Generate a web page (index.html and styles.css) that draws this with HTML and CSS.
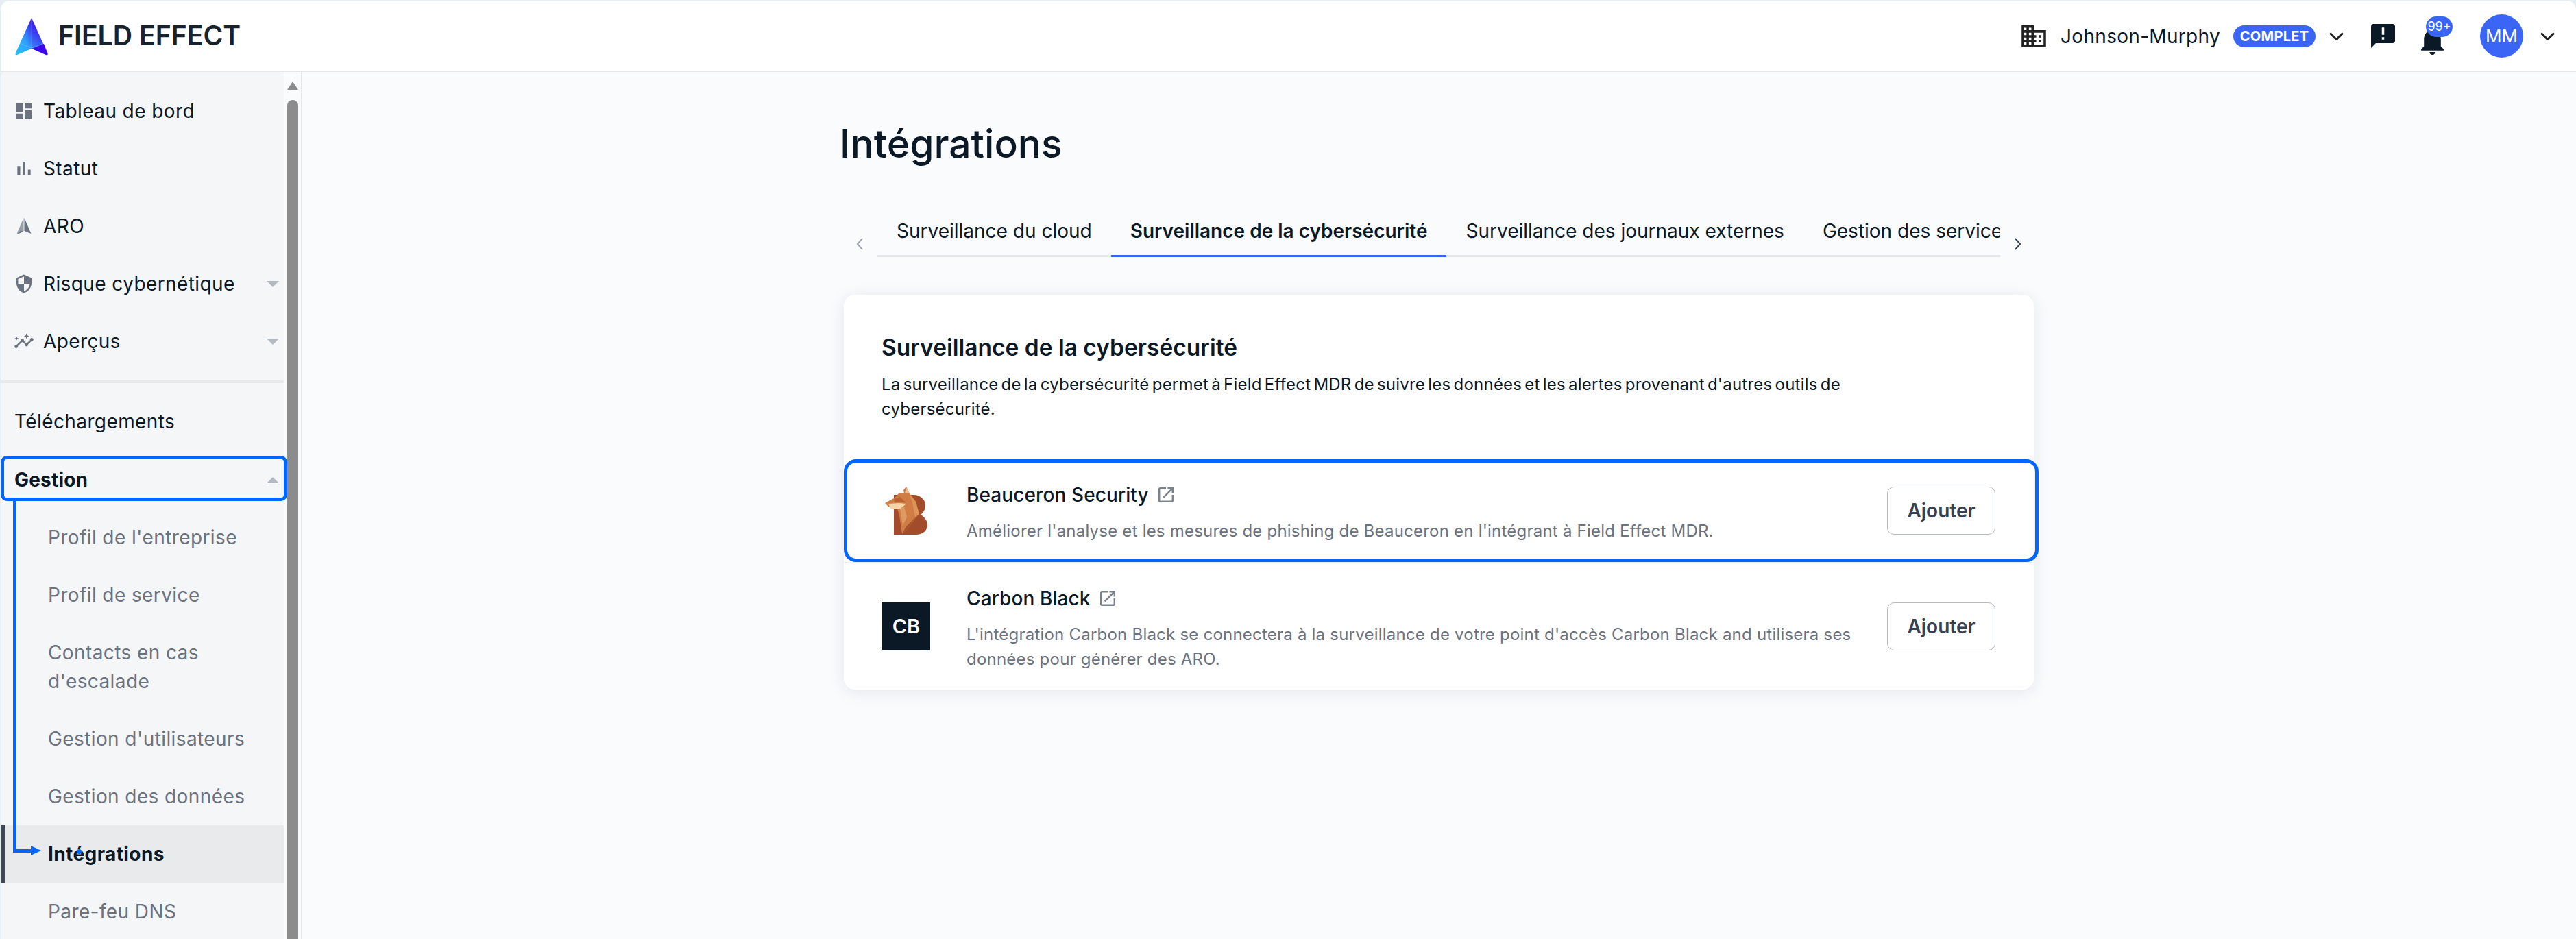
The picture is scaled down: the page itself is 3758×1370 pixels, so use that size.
FILE: index.html
```html
<!DOCTYPE html>
<html lang="fr">
<head>
<meta charset="utf-8">
<title>Intégrations</title>
<link rel="stylesheet" href="styles.css">
</head>
<body>
<div class="app">
  <header class="topbar">
    <div class="brand">
      <svg class="brand-mark" viewBox="0 0 50 56">
        <defs>
          <linearGradient id="fl" x1="0" y1="1" x2="0.7" y2="0"><stop offset="0" stop-color="#22c4f8"/><stop offset="0.55" stop-color="#2f9ffb"/><stop offset="1" stop-color="#3d2cf0"/></linearGradient>
          <linearGradient id="fr" x1="0" y1="1" x2="0.3" y2="0"><stop offset="0" stop-color="#3a9cf8"/><stop offset="1" stop-color="#3a00ee"/></linearGradient>
        </defs>
        <path d="M25 1 L1.5 53 Q1 56 4 55 L25 46 L25 1Z" fill="url(#fl)"/>
        <path d="M25 1 L48.5 53 Q49 56 46 55 L25 46Z" fill="url(#fr)"/>
        <path d="M26 46 L43 39 L48.5 53 Q49 56 46 55Z" fill="#3d06ee"/>
        <path d="M25 1 V45 M8 38 L25 45 L43 38" fill="none" stroke="#fff" stroke-opacity=".28" stroke-width=".7"/>
      </svg>
      <span class="brand-name">FIELD EFFECT</span>
    </div>
    <div class="account">
      <svg class="ic-domain" viewBox="2 3 20 18"><path d="M12 7V3H2v18h20V7H12zM6 19H4v-2h2v2zm0-4H4v-2h2v2zm0-4H4V9h2v2zm0-4H4V5h2v2zm4 12H8v-2h2v2zm0-4H8v-2h2v2zm0-4H8V9h2v2zm0-4H8V5h2v2zm10 12h-8v-2h2v-2h-2v-2h2v-2h-2V9h8v10zm-2-8h-2v2h2v-2zm0 4h-2v2h2v-2z"/></svg>
      <span class="company">Johnson-Murphy</span>
      <span class="plan">COMPLET</span>
      <svg class="chev" viewBox="1 1 18 10"><path d="M2 2l8 8 8-8"/></svg>
      <svg class="ic-alert" viewBox="2 2 20 20"><path d="M20 2H4c-1.1 0-1.99.9-1.99 2L2 22l4-4h14c1.1 0 2-.9 2-2V4c0-1.1-.9-2-2-2zm-7 9h-2V5h2v6zm0 4h-2v-2h2v2z"/></svg>
      <div class="bell">
        <svg class="ic-bell" viewBox="4 2.5 16 19.5"><path d="M12 22c1.1 0 2-.9 2-2h-4c0 1.1.89 2 2 2zm6-6v-5c0-3.07-1.64-5.64-4.5-6.32V4c0-.83-.67-1.5-1.5-1.5s-1.5.67-1.5 1.5v.68C7.63 5.36 6 7.92 6 11v5l-2 2v1h16v-1l-2-2z"/></svg>
        <span class="count">99+</span>
      </div>
      <span class="avatar">MM</span>
      <svg class="chev chev-last" viewBox="1 1 18 10"><path d="M2 2l8 8 8-8"/></svg>
    </div>
  </header>

  <div class="workspace">
    <aside class="sidebar">
      <nav class="nav">
        <a class="nav-item"><span class="nav-ic"><svg viewBox="-1.1 -1.1 26.2 26.2"><path d="M3 13h8V3H3v10zm0 8h8v-6H3v6zm10 0h8V11h-8v10zm0-18v6h8V3h-8z"/></svg></span>Tableau de bord</a>
        <a class="nav-item"><span class="nav-ic"><svg viewBox="0.4 0.4 23.2 23.2"><path d="M5 9.2h3V19H5zM10.6 5h2.8v14h-2.8zm5.6 8H19v6h-2.8z"/></svg></span>Statut</a>
        <a class="nav-item"><span class="nav-ic"><svg viewBox="0 0 32 32"><path d="M15.5 4 L5.5 27 L15.5 23Z" fill="#9aa0a8"/><path d="M16.5 4 L26.5 27 L16.5 23Z"/><path d="M5.5 28 L15.5 24 L11 22.5Z"/></svg></span>ARO</a>
        <a class="nav-item"><span class="nav-ic"><svg viewBox="-1.1 -1.1 26.2 26.2"><path d="M12 1L3 5v6c0 5.55 3.84 10.74 9 12 5.16-1.26 9-6.45 9-12V5l-9-4zm0 10.99h7c-.53 4.12-3.28 7.79-7 8.94V12H5V6.3l7-3.11v8.8z"/></svg></span>Risque cybernétique<span class="caret down"></span></a>
        <a class="nav-item"><span class="nav-ic"><svg class="ic-insights" viewBox="0 0 24 24"><path d="M21 8c-1.45 0-2.26 1.44-1.93 2.51l-3.55 3.56c-.3-.09-.74-.09-1.04 0l-2.55-2.55C12.27 10.45 11.46 9 10 9c-1.45 0-2.27 1.44-1.93 2.52l-4.56 4.55C2.44 15.74 1 16.55 1 18c0 1.1.9 2 2 2 1.45 0 2.26-1.44 1.93-2.51l4.55-4.56c.3.09.74.09 1.04 0l2.55 2.55C12.73 16.55 13.54 18 15 18c1.45 0 2.27-1.44 1.93-2.52l3.56-3.55c1.07.33 2.51-.48 2.51-1.93 0-1.1-.9-2-2-2z"/><path d="M15 9l.94-2.07L18 6l-2.06-.93L15 3l-.92 2.07L12 6l2.08.93zM3.5 11L4 9l2-.5L4 8l-.5-2L3 8l-2 .5L3 9z"/></svg></span>Aperçus<span class="caret down"></span></a>
        <div class="nav-rule"></div>
        <a class="nav-item plain">Téléchargements</a>
        <a class="nav-item plain strong">Gestion<span class="caret up"></span></a>
        <a class="nav-sub">Profil de l'entreprise</a>
        <a class="nav-sub">Profil de service</a>
        <a class="nav-sub">Contacts en cas d'escalade</a>
        <a class="nav-sub">Gestion d'utilisateurs</a>
        <a class="nav-sub">Gestion des données</a>
        <a class="nav-sub current">Intégrations</a>
        <a class="nav-sub">Pare-feu DNS</a>
      </nav>
      <div class="guide-box"></div>
      <div class="guide-line"></div>
      <div class="guide-turn"></div>
      <div class="guide-dot"></div>
    </aside>
    <div class="scrollbar">
      <span class="scroll-up"></span>
      <span class="scroll-thumb"></span>
    </div>

    <main class="main">
      <div class="page">
        <h1 class="page-title">Intégrations</h1>
        <div class="tabs">
          <svg class="tab-arrow muted" viewBox="0 0 12 20"><path d="M10 2L3 10l7 8"/></svg>
          <div class="tab-track">
            <a class="tab">Surveillance du cloud</a>
            <a class="tab active">Surveillance de la cybersécurité</a>
            <a class="tab">Surveillance des journaux externes</a>
            <a class="tab">Gestion des services</a>
          </div>
          <svg class="tab-arrow" viewBox="0 0 12 20"><path d="M2 2l7 8-7 8"/></svg>
        </div>

        <section class="card">
          <div class="card-head">
            <h2 class="card-title">Surveillance de la cybersécurité</h2>
            <p class="card-desc">La surveillance de la cybersécurité permet à Field Effect MDR de suivre les données et les alertes provenant d'autres outils de cybersécurité.</p>
          </div>

          <div class="row highlighted">
            <svg class="row-logo" viewBox="18 18 70 70">
              <path d="M35 30H63C75 30 81 38 81 45C81 52 77 57 74 59C80 62 84 68 84 74C84 82 77 88 67 88H35Z" fill="#a24c2b"/>
              <path d="M43 27L50 28L49 23L53 18L58 28L67 40L72 58L68 62L55 80L47 87L43 60L40 50L27 47L22 42L35 35Z" fill="#cf7d45"/>
              <path d="M51 28L53 19L58 28Z" fill="#f1b98a"/>
              <path d="M58 28L67 40L72 58L66 62L62 42Z" fill="#dd9555"/>
              <path d="M47 87L53 76L68 61L55 80Z" fill="#a9552c"/>
              <path d="M35 36L44 33L52 41L36 41Z" fill="#b9642f"/>
              <path d="M27 43L42 42L53 43L45 50L39 50L30 50Z" fill="#f8d5a8"/>
              <path d="M44 50L50 47L54 62L48 75Z" fill="#de9a60"/>
            </svg>
            <div class="row-body">
              <h3 class="row-name">Beauceron Security<svg class="ext" viewBox="3 3 18 18"><path d="M19 19H5V5h7V3H5c-1.11 0-2 .9-2 2v14c0 1.1.89 2 2 2h14c1.1 0 2-.9 2-2v-7h-2v7zM14 3v2h3.59l-9.83 9.83 1.41 1.41L19 6.41V10h2V3h-7z"/></svg></h3>
              <p class="row-desc">Améliorer l'analyse et les mesures de phishing de Beauceron en l'intégrant à Field Effect MDR.</p>
            </div>
            <button class="add">Ajouter</button>
          </div>

          <div class="row tall">
            <span class="row-logo cb">CB</span>
            <div class="row-body">
              <h3 class="row-name">Carbon Black<svg class="ext" viewBox="3 3 18 18"><path d="M19 19H5V5h7V3H5c-1.11 0-2 .9-2 2v14c0 1.1.89 2 2 2h14c1.1 0 2-.9 2-2v-7h-2v7zM14 3v2h3.59l-9.83 9.83 1.41 1.41L19 6.41V10h2V3h-7z"/></svg></h3>
              <p class="row-desc">L'intégration Carbon Black se connectera à la surveillance de votre point d'accès Carbon Black and utilisera ses données pour générer des ARO.</p>
            </div>
            <button class="add">Ajouter</button>
          </div>
        </section>
      </div>
    </main>
  </div>
</div>
</body>
</html>
```
FILE: styles.css
```css
* { box-sizing: border-box; }
html, body { margin: 0; height: 100%; }
body {
  background: #e4eef3;
  font-family: Inter, "Noto Sans", sans-serif;
  color: #0b1826;
  overflow: hidden;
  padding-top: 1px;
}
.app { height: 1369px; display: flex; flex-direction: column; overflow: hidden; border-radius: 14px 14px 0 0; background: #fafbfd; margin-left: 1px; }

/* top bar */
.topbar {
  height: 104px;
  flex: none;
  background: #fff;
  border-bottom: 1px solid #e5e7eb;
  display: flex;
  align-items: center;
  justify-content: space-between;
  padding: 0 31px 0 20px;
}
.brand { display: flex; align-items: center; gap: 14px; margin-top: -1px; }
.brand-mark { width: 50px; height: 56px; display: block; margin-top: 2px; }
.brand-name { font-size: 39.2px; font-weight: 600; color: #18222c; line-height: 1; }
.account { display: flex; align-items: center; }
.ic-domain { width: 36px; height: 32px; fill: #222; }
.company { font-size: 28px; letter-spacing: .3px; margin-left: 21px; white-space: nowrap; }
.plan {
  margin-left: 19px;
  background: #3b66f5;
  color: #fff;
  height: 32px;
  width: 120px;
  border-radius: 16px;
  font-size: 20px;
  font-weight: 700;
  letter-spacing: .3px;
  display: flex;
  align-items: center;
  justify-content: center;
}
.chev { width: 21px; height: 12px; fill: none; stroke: #222; stroke-width: 2.6; margin-left: 20px; }
.ic-alert { width: 35px; height: 35px; fill: #0b1826; margin-left: 40px; }
.bell { position: relative; width: 33px; height: 40px; margin-left: 38px; margin-top: 14px; }
.ic-bell { width: 33px; height: 40px; fill: #0b1826; display: block; }
.count {
  position: absolute;
  left: 7px;
  top: -16px;
  width: 39px;
  height: 30px;
  border-radius: 15px;
  background: #3b66f5;
  color: #fff;
  font-size: 18px;
  display: flex;
  align-items: center;
  justify-content: center;
}
.avatar {
  width: 63px;
  height: 63px;
  border-radius: 50%;
  background: #3b66f5;
  color: #fff;
  font-size: 26px;
  margin-left: 53px;
  display: flex;
  align-items: center;
  justify-content: center;
}
.chev-last { margin-left: 25px; }

/* layout */
.workspace { flex: 1; min-height: 0; display: flex; }
.sidebar { width: 413px; flex: none; background: #f5f6f8; position: relative; z-index: 2; }
.scrollbar { width: 26px; flex: none; background: #fafbfc; border-right: 1px solid #e5e7eb; padding: 14px 5px 0 5px; display: flex; flex-direction: column; gap: 15px; }
.scroll-up { width: 0; height: 0; border-left: 8px solid transparent; border-right: 8px solid transparent; border-bottom: 12px solid #8c8c8c; }
.scroll-thumb { flex: 1; background: #8c8c8c; width: 16px; border-radius: 8px 8px 0 0; }

/* nav */
.nav { display: flex; flex-direction: column; padding-top: 15px; letter-spacing: .4px; }
.nav-item {
  height: 84px;
  flex: none;
  font-size: 28px;
  display: flex;
  align-items: center;
  padding: 0 7px 0 18px;
  gap: 12px;
  white-space: nowrap;
}
.nav-ic { width: 32px; height: 32px; display: flex; align-items: center; justify-content: center; flex: none; }
.nav-ic svg { width: 32px; height: 32px; fill: #6b7280; }
.nav-ic .ic-insights { width: 30px; height: 30px; }
.nav-item.plain { padding-left: 20px; }
.nav-item.strong { font-weight: 700; letter-spacing: .2px; margin-top: 1px; }
.caret { margin-left: auto; width: 0; height: 0; border-left: 9px solid transparent; border-right: 9px solid transparent; }
.caret.down { border-top: 9px solid #b4b9c0; }
.caret.up { border-bottom: 9px solid #b4b9c0; }
.nav-rule { height: 4px; background: #e9eaec; margin: 15px 0 14px; flex: none; }
.nav-sub {
  min-height: 84px;
  padding: 21px 20px 21px 69px;
  font-size: 28px;
  line-height: 42px;
  color: #6b7280;
}
.nav-sub.current {
  background: #e9eaec;
  color: #0b1826;
  font-weight: 700;
  box-shadow: inset 7px 0 0 #414b57;
}

/* overlay guide */
.guide-box { position: absolute; left: 0; top: 560px; width: 418px; height: 66px; border: 5px solid #0066ff; border-radius: 9px; }
.guide-line { position: absolute; left: 18px; top: 625px; width: 5px; height: 514px; background: #0066ff; }
.guide-turn { position: absolute; left: 18px; top: 1134px; width: 26px; height: 5px; background: #0066ff; }
.guide-turn::after { content: ""; position: absolute; left: 26px; top: -5px; border-left: 15px solid #0066ff; border-top: 7.5px solid transparent; border-bottom: 7.5px solid transparent; }
.guide-dot { position: absolute; left: 111px; top: 1134px; width: 7px; height: 7px; border-radius: 50%; background: #0066ff; }

/* main */
.main { flex: 1; min-width: 0; display: flex; justify-content: center; }
.page { width: 1736px; padding-top: 70px; }
.page-title { margin: 0 0 0 -6px; font-size: 57px; line-height: 70px; font-weight: 500; color: #0b1826; }
.tabs { display: flex; align-items: flex-end; height: 75px; margin-top: 55px; }
.tab-arrow { width: 12px; height: 20px; fill: none; stroke: #374151; stroke-width: 2; flex: none; margin: 0 17px 0 20px; position: relative; top: -9px; }
.tab-arrow.muted { stroke: #9ca3af; margin: 0 20px 0 17px; }
.tab-track { flex: 1; min-width: 0; height: 75px; display: flex; overflow: hidden; box-shadow: inset 0 -3px 0 #e5e7eb; }
.tab {
  flex: none;
  height: 75px;
  padding: 0 28px 2px;
  display: flex;
  align-items: center;
  font-size: 28px;
  white-space: nowrap;
}
.tab.active { font-weight: 600; box-shadow: inset 0 -3px 0 #3b66f5; }

.card { margin-top: 55px; background: #fff; border-radius: 16px; box-shadow: 0 4px 24px rgba(15, 30, 50, .09); }
.card-head { padding: 55px 56px 0 55px; height: 240px; }
.card-title { margin: 0; font-size: 33.5px; line-height: 44px; font-weight: 600; }
.card-desc { margin: 14px 0 0; font-size: 24px; letter-spacing: .22px; word-spacing: -2.8px; line-height: 36px; color: #0b1826; max-width: 1400px; }
.row { display: flex; align-items: center; height: 150px; padding: 0 56px; position: relative; }
.row.tall { height: 186px; border-top: 1px solid #eceef1; }
.row.highlighted::after { content: ""; position: absolute; left: 0; right: -7px; top: 0; bottom: 0; border: 5px solid #0066ff; border-radius: 18px; z-index: 1; pointer-events: none; }
.row-logo { width: 70px; height: 70px; flex: none; }
.cb { background: #0b1826; color: #fff; font-size: 29px; font-weight: 600; display: flex; align-items: center; justify-content: center; }
.row-body { margin-left: 53px; flex: 1; min-width: 0; margin-top: 5px; }
.row-name { margin: 0; display: flex; align-items: center; gap: 14px; font-size: 28px; line-height: 40px; font-weight: 500; letter-spacing: .1px; }
.ext { width: 22px; height: 22px; fill: #7c828c; }
.row-desc { margin: 15px 0 0; max-width: 1320px; font-size: 24px; line-height: 36px; letter-spacing: .22px; color: #6b7280; }
.add {
  width: 158px;
  height: 70px;
  flex: none;
  background: #fff;
  border: 1px solid #b6bac2;
  border-radius: 10px;
  font-family: inherit;
  font-size: 28px;
  font-weight: 600;
  color: #374151;
}
```
